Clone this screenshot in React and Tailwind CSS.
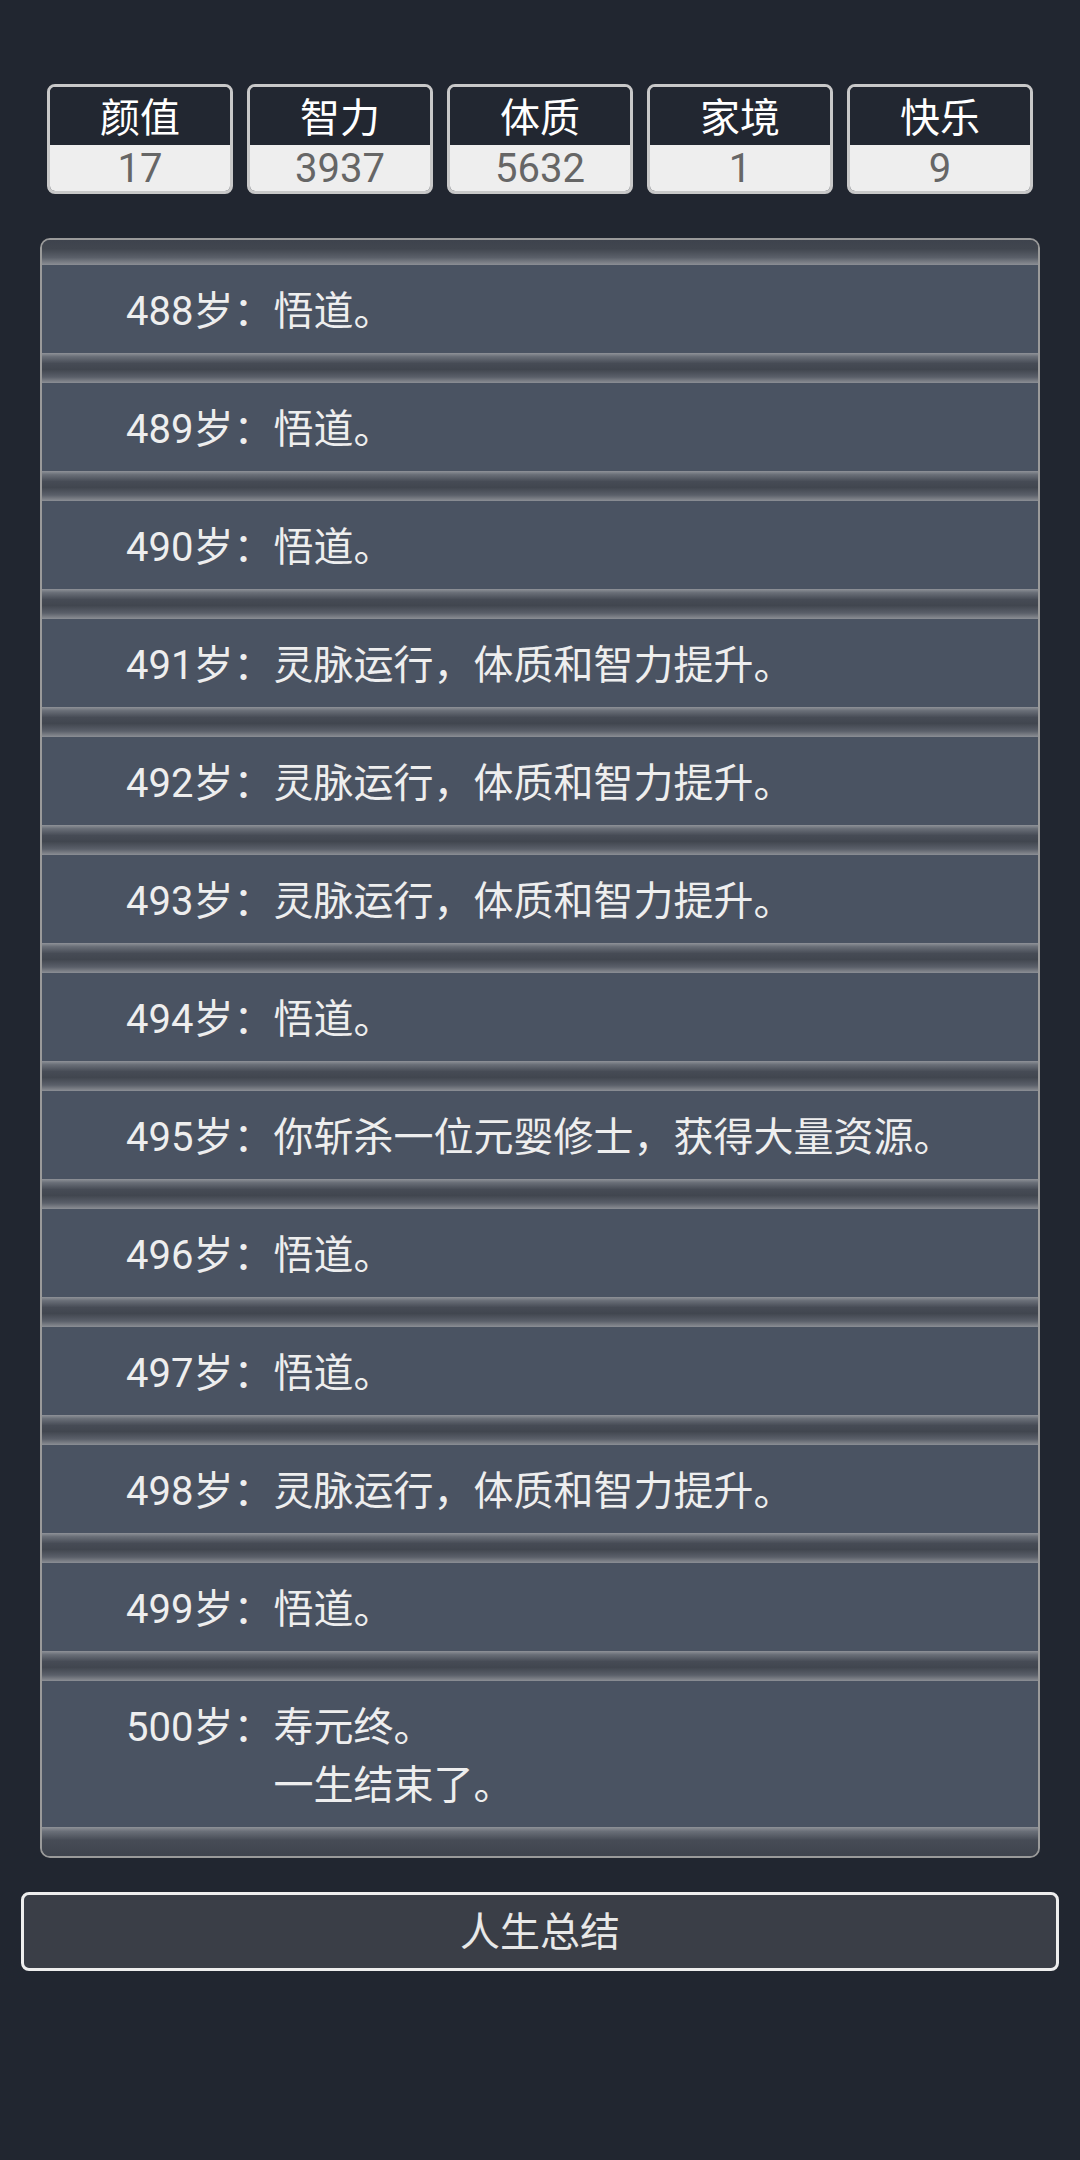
import React from "react";

const stats = [
  { label: "颜值", value: 17 },
  { label: "智力", value: 3937 },
  { label: "体质", value: 5632 },
  { label: "家境", value: 1 },
  { label: "快乐", value: 9 },
];

const events = [
  { age: 488, lines: ["悟道。"] },
  { age: 489, lines: ["悟道。"] },
  { age: 490, lines: ["悟道。"] },
  { age: 491, lines: ["灵脉运行，体质和智力提升。"] },
  { age: 492, lines: ["灵脉运行，体质和智力提升。"] },
  { age: 493, lines: ["灵脉运行，体质和智力提升。"] },
  { age: 494, lines: ["悟道。"] },
  { age: 495, lines: ["你斩杀一位元婴修士，获得大量资源。"] },
  { age: 496, lines: ["悟道。"] },
  { age: 497, lines: ["悟道。"] },
  { age: 498, lines: ["灵脉运行，体质和智力提升。"] },
  { age: 499, lines: ["悟道。"] },
  { age: 500, lines: ["寿元终。", "一生结束了。"] },
];

const StatBox = ({ label, value }) => (
  <div className="w-[186px] h-[110px] border-[3px] border-[#c8c8c8] rounded-[8px] overflow-hidden flex flex-col">
    <div className="h-[58px] pt-[6px] bg-[#222731] text-white text-[40px] leading-none flex items-center justify-center">
      {label}
    </div>
    <div className="flex-1 pt-[2px] bg-[#eeeeee] text-[#666666] text-[40px] leading-none flex items-center justify-center">
      {value}
    </div>
  </div>
);

const Separator = () => (
  <div className="h-[30px] bg-[linear-gradient(to_bottom,#8f9298_0%,#6a6f78_12%,#464b55_35%,#41464f_55%,#5a5f69_80%,#8c8f95_100%)]" />
);

const App = () => {
  return (
    <div className="min-h-[2160px] bg-[#212630] font-[Roboto,'Noto_Sans_CJK_SC',sans-serif]">
      {/* Stats */}
      <div className="pt-[84px] px-[47px] flex gap-[14px]">
        {stats.map((s) => (
          <StatBox key={s.label} label={s.label} value={s.value} />
        ))}
      </div>

      {/* Life trajectory */}
      <div className="mt-[44px] mx-[40px] border-2 border-[#9a9a9a] rounded-[10px] bg-[#41464f] overflow-hidden">
        <div className="h-[25px] bg-[linear-gradient(to_bottom,#3e434d_0%,#41464f_35%,#5a5f69_70%,#8c8f95_100%)]" />
        {events.map((e, i) => (
          <React.Fragment key={e.age}>
            {i > 0 && <Separator />}
            <div className="bg-[#4a5362] pt-[18px] pb-[12px] pl-[84px] pr-6 flex text-[40px] leading-[58px] text-[#eeeeee]">
              <span className="whitespace-nowrap">{e.age}岁：</span>
              <div>
                {e.lines.map((l) => (
                  <div key={l}>{l}</div>
                ))}
              </div>
            </div>
          </React.Fragment>
        ))}
        <div className="h-[29px] bg-[linear-gradient(to_bottom,#8f9298_0%,#6a6f78_15%,#474c56_45%,#3f444e_100%)]" />
      </div>

      {/* Summary button */}
      <div className="px-[21px] mt-[34px]">
        <button className="w-full h-[79px] pt-[3px] border-[3px] border-[#eeeeee] rounded-[8px] bg-[#3a3e47] text-[40px] text-[#e8e8e8] flex items-center justify-center">
          人生总结
        </button>
      </div>
    </div>
  );
};

export default App;
